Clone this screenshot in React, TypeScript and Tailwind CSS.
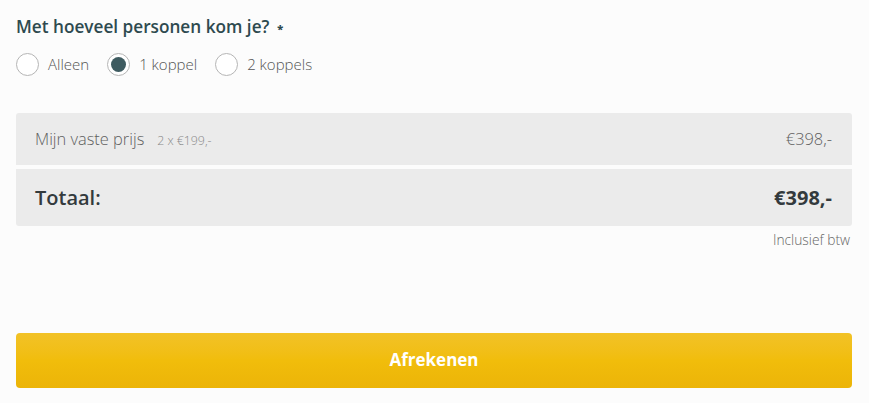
import React from "react";

function Radio({ label, checked, className }: { label: string; checked?: boolean; className?: string }) {
  return (
    <label className={"flex items-center " + (className ?? "")}>
      <span className="flex h-[23px] w-[23px] items-center justify-center rounded-full border border-[#b5b5b5] bg-white">
        {checked && <span className="h-[15px] w-[15px] rounded-full bg-[#3e5b60]" />}
      </span>
      <span className="ml-[9px] text-[15px] font-light text-[#555]">{label}</span>
    </label>
  );
}

export default function App() {
  return (
    <div
      className="h-[403px] w-[869px] bg-[#fcfcfc] px-4 pt-[15px]"
      style={{ fontFamily: '"Open Sans", "Noto Sans", sans-serif' }}
    >
      <h2 className="flex items-center text-[17.2px] font-semibold leading-[24px] text-[#2e4a4f]">
        Met hoeveel personen kom je?
        <span className="ml-[8px] mt-[2px] text-[11px] font-extrabold leading-none text-[#2e4a4f]">*</span>
      </h2>
      <div className="mt-[14px] flex items-center">
        <Radio label="Alleen" />
        <Radio label="1 koppel" checked className="ml-[18px]" />
        <Radio label="2 koppels" className="ml-[18px]" />
      </div>

      <div className="mt-[37px] w-[836px]">
        <div className="flex h-[52px] items-center justify-between rounded-t-[3px] bg-[#ebebeb] pl-[19px] pr-[20px]">
          <div className="flex items-baseline">
            <span className="text-[16.4px] font-light text-[#5f5f5f]">Mijn vaste prijs</span>
            <span className="ml-[13px] text-[12.3px] font-light text-[#888]">2 x €199,-</span>
          </div>
          <span className="text-[16.4px] font-light text-[#5f5f5f]">€398,-</span>
        </div>
        <div className="mt-[4px] flex h-[57px] items-center justify-between rounded-b-[3px] bg-[#ebebeb] pl-[19px] pr-[20px]">
          <span className="text-[20px] font-semibold text-[#333a3d]">Totaal:</span>
          <span className="text-[20px] font-bold text-[#333a3d]">€398,-</span>
        </div>
        <div className="mt-[4px] flex justify-end pr-[2px]">
          <span className="text-[13.8px] font-light text-[#666]">Inclusief btw</span>
        </div>
      </div>

      <button className="mt-[82px] flex h-[55px] w-[836px] items-center justify-center rounded-[4px] bg-gradient-to-b from-[#f2c226] via-[#f1bd0b] to-[#ecb408] text-[17px] font-bold text-white">
        Afrekenen
      </button>
    </div>
  );
}
